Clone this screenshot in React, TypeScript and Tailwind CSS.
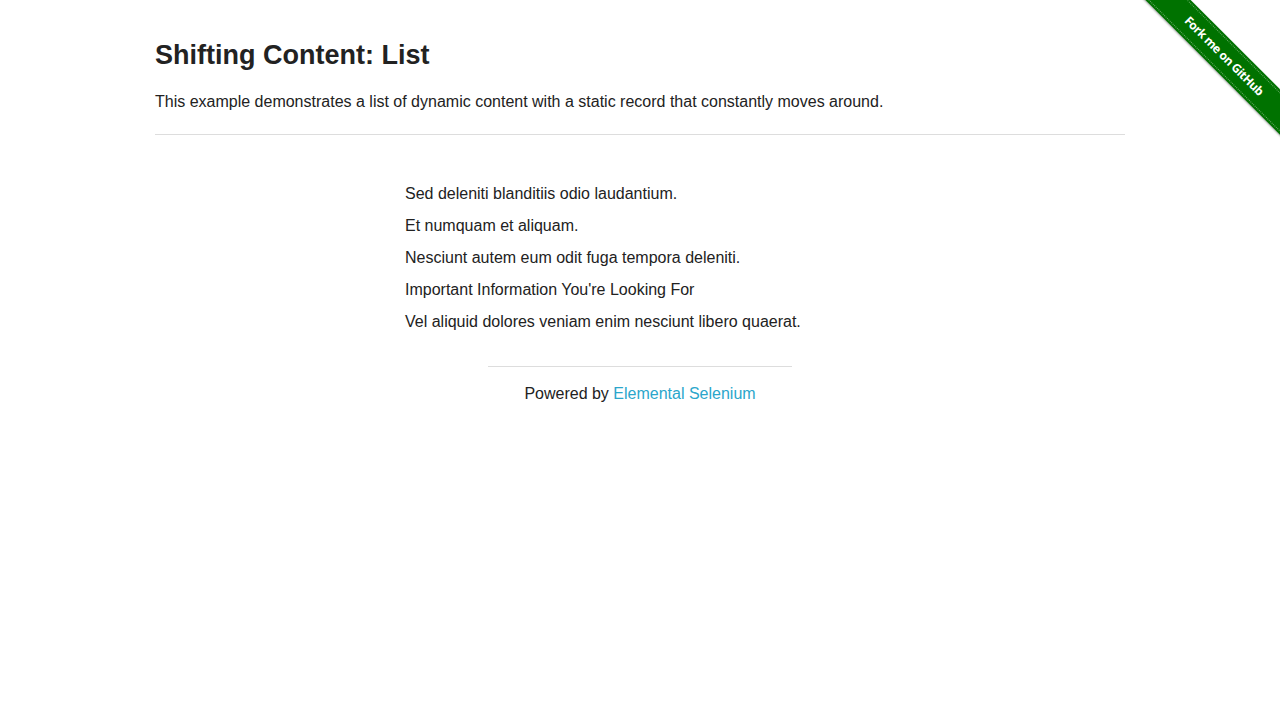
import React from 'react'

const items = [
  'Sed deleniti blanditiis odio laudantium.',
  'Et numquam et aliquam.',
  'Nesciunt autem eum odit fuga tempora deleniti.',
  "Important Information You're Looking For",
  'Vel aliquid dolores veniam enim nesciunt libero quaerat.',
]

const Ribbon = () => (
  <div className="absolute top-0 right-0 w-[149px] h-[149px] overflow-hidden pointer-events-none">
    <div className="absolute left-[-17px] top-[40px] w-[220px] h-[32px] rotate-45 bg-[#007200] shadow-[0_1px_2px_rgba(0,0,0,0.35)] flex items-center justify-center">
      <div className="absolute inset-x-0 top-[2px] bottom-[2px] border-y border-dotted border-white/40" />
      <span className="relative text-white text-[12px] font-bold tracking-[-0.4px] [font-family:'Open_Sans',sans-serif]">
        Fork me on GitHub
      </span>
    </div>
  </div>
)

const App = () => {
  return (
    <div className="relative min-h-screen bg-white text-[#222222] [font-family:'Liberation_Sans',Arial,sans-serif]">
      <Ribbon />
      <div className="mx-auto max-w-[1000px] px-[15px] pt-[36px]">
        <h3 className="text-[27px] leading-[38px] font-bold">Shifting Content: List</h3>
        <p className="mt-[15px] text-[16px] leading-[25.6px]">
          This example demonstrates a list of dynamic content with a static record that constantly moves around.
        </p>
        <hr className="mt-[19px] border-0 border-t border-[#dddddd]" />
        <div className="mx-auto w-[470px] mt-[43px]">
          {items.map((item, i) => (
            <div key={i} className="text-[16px] leading-[32px]">
              {item}
            </div>
          ))}
        </div>
        <div className="mx-auto w-[304px] mt-[28px]">
          <hr className="border-0 border-t border-[#dddddd]" />
          <div className="mt-[14px] text-center text-[16px] leading-[25.6px]">
            Powered by <a href="#" className="text-[#2ba6cb]">Elemental Selenium</a>
          </div>
        </div>
      </div>
    </div>
  )
}

export default App
